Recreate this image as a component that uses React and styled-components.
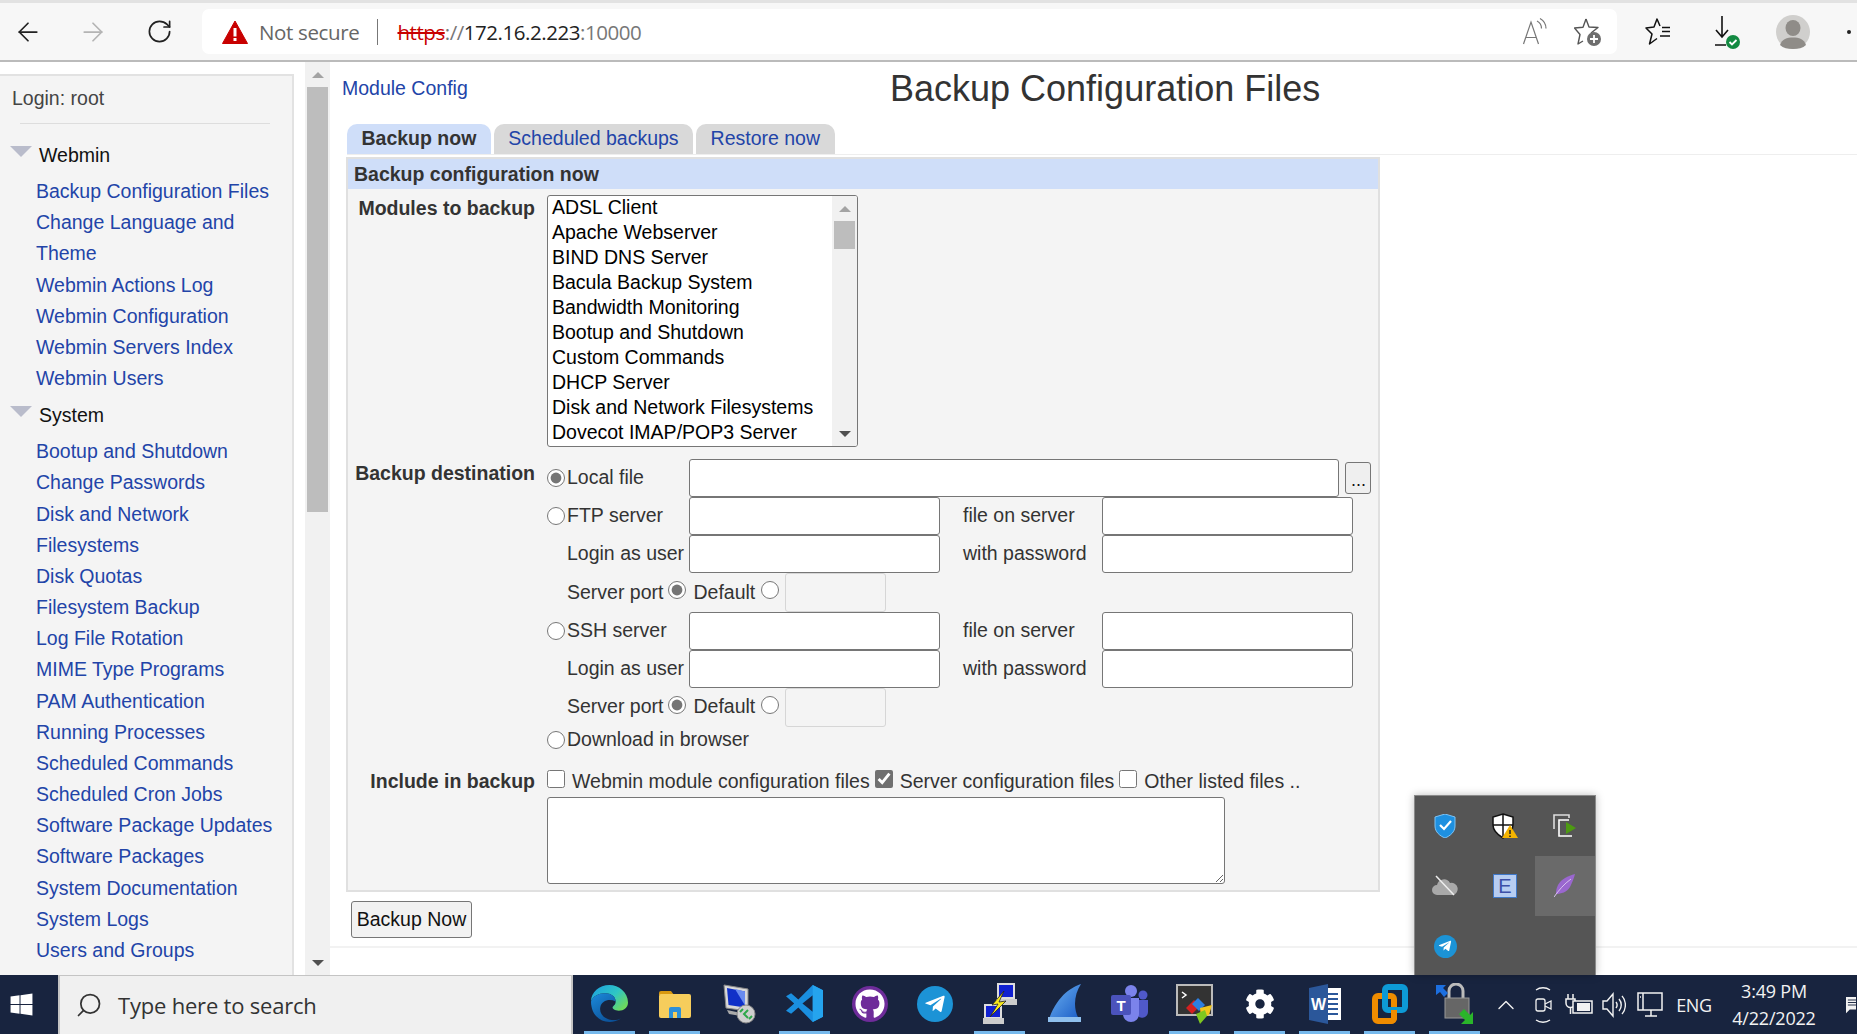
import React from 'react'
import styled, { createGlobalStyle } from 'styled-components'
import { ArrowLeft, ArrowRight, RotateCw, Search, ChevronUp } from 'lucide-react'
import { FaWindows, FaGithub, FaTelegramPlane, FaCog } from 'react-icons/fa'

const GlobalStyle = createGlobalStyle`
  html, body {
    margin: 0;
    padding: 0;
    height: 1034px;
    overflow: hidden;
    background: #fff;
    font-family: "Liberation Sans", Arial, sans-serif;
    font-size: 19.5px;
    color: #333;
  }
  * { box-sizing: border-box; }
`

const Screen = styled.div`
  position: relative;
  width: 1857px;
  height: 1034px;
  display: flex;
  flex-direction: column;
  overflow: hidden;
`

/* browser toolbar */
const Toolbar = styled.div`
  height: 62px;
  flex: none;
  background: #f7f7f7;
  border-top: 3px solid #e2e2e2;
  border-bottom: 2px solid #bbb;
  display: flex;
  align-items: center;
  padding-left: 13px;
  overflow: hidden;
`

const NavButton = styled.div`
  width: 30px;
  height: 30px;
  display: flex;
  align-items: center;
  justify-content: center;
  margin-right: ${p => p.$gap || 0}px;
  color: ${p => p.$dim ? '#b4b4b4' : '#222'};
  flex: none;
`

const AddressBar = styled.div`
  width: 1415px;
  height: 45px;
  margin-left: 28px;
  background: #fff;
  border-radius: 7px;
  display: flex;
  align-items: center;
  padding-left: 20px;
  font-family: "Open Sans", sans-serif;
  font-size: 20.5px;
  flex: none;
`

const NotSecure = styled.span`
  color: #666;
  margin-left: 11px;
  font-size: 20.5px;
  letter-spacing: -0.35px;
`

const Divider = styled.span`
  width: 1px;
  height: 26px;
  background: #777;
  margin: 0 19px 0 18px;
`

const UrlPart = styled.span`
  color: ${p => p.$color};
  text-decoration: ${p => p.$strike ? 'line-through' : 'none'};
  letter-spacing: -0.45px;
`

const AddressIcons = styled.div`
  margin-left: auto;
  display: flex;
  align-items: center;
  gap: 24px;
  padding-right: 15px;
`

const ToolIcons = styled.div`
  display: flex;
  align-items: center;
  margin-left: 28px;
`

const ToolSlot = styled.div`
  display: flex;
  margin-left: ${p => p.$gap || 0}px;
`

const MoreDot = styled.span`
  width: 4px;
  height: 4px;
  border-radius: 50%;
  background: #222;
  margin-left: 37px;
`

/* frame under the toolbar */
const Frame = styled.div`
  flex: 1;
  min-height: 0;
  display: flex;
  background: #fff;
`

const Sidebar = styled.aside`
  width: 294px;
  margin-top: 12px;
  flex: none;
  background: #f4f4f4;
  border-top: 2px solid #e2e2e2;
  border-right: 2px solid #e2e2e2;
  padding: 10px 0 0 12px;
  overflow: hidden;
`

const Login = styled.div`
  line-height: 24px;
  color: #444;
`

const SideRule = styled.hr`
  border: 0;
  height: 1px;
  background: #ddd;
  width: 250px;
  margin: 13px 0 0 8px;
`

const SectionTitle = styled.div`
  display: flex;
  align-items: center;
  line-height: 31px;
  color: #111;
  margin-top: ${p => p.$top}px;
  margin-left: -2px;
`

const Fold = styled.span`
  width: 0;
  height: 0;
  border-left: 11px solid transparent;
  border-right: 11px solid transparent;
  border-top: 11px solid #b9bccb;
  margin-right: 7px;
  position: relative;
  top: -4px;
`

const SideList = styled.div`
  margin: 5px 0 0 24px;
  width: 245px;
`

const SideLink = styled.a`
  display: block;
  color: #2244a8;
  line-height: 31.17px;
  text-decoration: none;
`

const ScrollColumn = styled.div`
  width: 25px;
  margin-left: 11px;
  flex: none;
  background: #f1f1f1;
  display: flex;
  flex-direction: column;
  align-items: center;
`

const ArrowCell = styled.div`
  height: 25px;
  flex: none;
  display: flex;
  align-items: center;
  justify-content: center;
  margin-top: ${p => p.$auto ? 'auto' : 0};
`

const ArrowUp = styled.span`
  border-left: 6px solid transparent;
  border-right: 6px solid transparent;
  border-bottom: 6px solid ${p => p.$color || '#a3a3a3'};
`

const ArrowDown = styled.span`
  border-left: 6px solid transparent;
  border-right: 6px solid transparent;
  border-top: 6px solid ${p => p.$color || '#505050'};
`

const ScrollThumb = styled.div`
  width: 21px;
  height: 425px;
  background: #bdbdbd;
  flex: none;
`

/* webmin page */
const Main = styled.main`
  flex: 1;
  min-width: 0;
`

const PageHead = styled.div`
  height: 62px;
  display: flex;
  align-items: flex-start;
  padding-left: 12px;
`

const ModuleLink = styled.a`
  color: #2244a8;
  text-decoration: none;
  line-height: 24px;
  margin-top: 14px;
  width: 548px;
`

const PageTitle = styled.h1`
  font-size: 36px;
  font-weight: 400;
  line-height: 40px;
  margin: 7px 0 0;
  color: #333;
`

const Tabs = styled.div`
  display: flex;
  gap: 3px;
  margin-left: 17px;
  height: 31px;
  border-bottom: 1px solid #eee;
`

const Tab = styled.a`
  height: 30px;
  padding: 0 14.5px;
  border-radius: 10px 10px 0 0;
  background: ${p => p.$active ? '#cfdef9' : '#d9d9d9'};
  color: ${p => p.$active ? '#333' : '#2244a8'};
  font-weight: ${p => p.$active ? 700 : 400};
  line-height: 28px;
  text-decoration: none;
`

const Panel = styled.section`
  width: 1034px;
  height: 735px;
  margin: 2px 0 0 16px;
  border: 2px solid #e0e0e0;
  background: #f4f4f4;
`

const PanelHead = styled.div`
  height: 30px;
  background: #cfdef9;
  font-weight: 700;
  padding-left: 6px;
  line-height: 30px;
  color: #333;
`

const FormRow = styled.div`
  display: grid;
  grid-template-columns: 187px 1fr;
  column-gap: 12px;
  margin-top: ${p => p.$top || 0}px;
`

const FieldLabel = styled.div`
  font-weight: 700;
  text-align: right;
  line-height: 26px;
  padding-top: ${p => p.$top || 0}px;
  white-space: nowrap;
`

const ListBox = styled.div`
  width: 311px;
  height: 252px;
  background: #fff;
  border: 1px solid #767676;
  border-radius: 3px;
  display: flex;
  overflow: hidden;
`

const ListItems = styled.ul`
  flex: 1;
  list-style: none;
  margin: -1px 0 0;
  padding: 0 0 0 4px;
`

const ListItem = styled.li`
  line-height: 25px;
  color: #000;
  white-space: nowrap;
`

const ListScroll = styled.div`
  width: 25px;
  flex: none;
  background: #f1f1f1;
  display: flex;
  flex-direction: column;
  align-items: center;
`

const ListThumb = styled.div`
  width: 21px;
  height: 28px;
  background: #bdbdbd;
  flex: none;
`

const DestGrid = styled.div`
  display: grid;
  grid-template-columns: 20px 122px 251px 162px 251px 20px;
  grid-template-rows: repeat(7, 38.2px) 28px;
  align-items: center;
`

const Radio = styled.input.attrs({ type: 'radio' })`
  width: 18px;
  height: 18px;
  margin: 0;
  accent-color: #757575;
  flex: none;
`

const CheckBox = styled.input.attrs({ type: 'checkbox' })`
  width: 18px;
  height: 18px;
  margin: 0;
  accent-color: #707070;
  flex: none;
  position: relative;
  top: -2px;
`

const FieldText = styled.label`
  white-space: nowrap;
  color: #333;
  grid-column: ${p => p.$col || 'auto'};
  padding-left: ${p => p.$pad || 0}px;
  margin-top: -1px;
`

const TextInput = styled.input.attrs({ type: 'text' })`
  height: 38px;
  width: ${p => p.$width || 251}px;
  border: 1px solid #767676;
  border-radius: 3px;
  background: #fff;
  padding: 0;
  grid-column: ${p => p.$col || 'auto'};
`

const WideCell = styled.div`
  grid-column: 3 / -1;
  display: flex;
  align-items: center;
  gap: 6px;
`

const BrowseButton = styled.button`
  width: 26px;
  height: 32px;
  padding: 4px 0 0 1px;
  border: 1px solid #767676;
  border-radius: 3px;
  background: #efefef;
  font-family: inherit;
  font-size: 18px;
  color: #111;
`

const PortCell = styled.div`
  grid-column: 2 / -1;
  display: flex;
  align-items: center;
  height: 38px;
`

const PortRadio = styled(Radio)`
  margin: -5px ${p => p.$after}px 0 ${p => p.$before}px;
`

const PortInput = styled.input.attrs({ type: 'text', disabled: true })`
  width: 101px;
  height: 39px;
  border: 1px solid #d6d6d6;
  border-radius: 3px;
  background: #f4f4f4;
  padding: 0;
`

const DownloadRow = styled.div`
  grid-column: 1 / -1;
  height: 28px;
  display: flex;
  align-items: center;
  gap: 2px;
`

const IncludeRow = styled.div`
  display: flex;
  align-items: center;
  height: 26px;
  white-space: nowrap;
`

const IncludeText = styled.span`
  margin: 1px ${p => p.$after}px 0 7px;
`

const NotesBox = styled.textarea`
  display: block;
  width: 678px;
  height: 87px;
  margin-top: 3px;
  border: 1px solid #767676;
  border-radius: 3px;
  background: #fff;
  padding: 0;
`

const SubmitButton = styled.button`
  display: block;
  width: 121px;
  height: 37px;
  margin: 9px 0 0 21px;
  padding: 0;
  border: 1px solid #767676;
  border-radius: 3px;
  background: #f2f2f2;
  font-family: inherit;
  font-size: 19.5px;
  color: #111;
`

const BottomRule = styled.hr`
  border: 0;
  height: 2px;
  background: #f2f2f2;
  margin: 8px 0 0;
`

/* windows taskbar */
const Taskbar = styled.footer`
  height: 59px;
  flex: none;
  background: #18243f;
  display: flex;
  align-items: stretch;
  color: #f0f0f0;
`

const StartButton = styled.div`
  width: 58px;
  flex: none;
  display: flex;
  align-items: center;
  justify-content: center;
  color: #fff;
  padding-right: 15px;
`

const SearchBox = styled.div`
  width: 515px;
  flex: none;
  background: #f0f0f0;
  border: 2px solid #c4c4c4;
  border-bottom: 0;
  border-top-width: 1px;
  display: flex;
  align-items: center;
  padding-left: 15px;
  gap: 15px;
  font-family: "Open Sans", sans-serif;
  font-size: 22px;
  letter-spacing: -0.2px;
  color: #333;
`

const MirroredSearch = styled(Search)`
  transform: scaleX(-1);
`

const TaskIcons = styled.div`
  display: flex;
  margin-left: 4px;
`

const TaskButton = styled.div`
  position: relative;
  width: 65px;
  display: flex;
  align-items: center;
  justify-content: center;
  padding-bottom: 2px;
  &::after {
    content: '';
    display: ${p => p.$open ? 'block' : 'none'};
    position: absolute;
    left: 7px;
    right: 7px;
    bottom: 0;
    height: 3px;
    background: #76b9ed;
  }
`

const TrayCell = styled.div`
  width: ${p => p.$width}px;
  flex: none;
  display: flex;
  align-items: center;
  justify-content: center;
  color: #f2f2f2;
`

const TrayLabel = styled(TrayCell)`
  font-family: "Open Sans", sans-serif;
  font-size: 18px;
  letter-spacing: -0.3px;
`

const Clock = styled(TrayCell)`
  flex-direction: column;
  font-family: "Open Sans", sans-serif;
  font-size: 18px;
  line-height: 27px;
  letter-spacing: -0.2px;
`

const NoticeCell = styled(TrayCell)`
  justify-content: flex-start;
  padding-left: 18px;
  overflow: hidden;
`

/* hidden-icons flyout, sits over the page */
const TrayPopup = styled.div`
  position: absolute;
  left: 1414px;
  top: 795px;
  width: 182px;
  height: 180px;
  background: #555;
  border: 1px solid #8a8a8a;
  border-bottom: 0;
  box-shadow: 0 0 8px rgba(0, 0, 0, 0.25);
  display: grid;
  grid-template-columns: repeat(3, 60px);
  grid-auto-rows: 60px;
`

const PopupCell = styled.div`
  display: flex;
  align-items: center;
  justify-content: center;
  background: ${p => p.$hover ? '#6a6a6a' : 'transparent'};
`

const RoundIcon = styled.div`
  width: ${p => p.$size}px;
  height: ${p => p.$size}px;
  border-radius: 50%;
  background: ${p => p.$bg};
  display: flex;
  align-items: center;
  justify-content: center;
  color: #fff;
`

/* drawings */
const WarningIcon = () => (
  <svg width="26" height="24" viewBox="0 0 26 24">
    <path d="M13 1 25.500 23.500H.5z" fill="#c80000" stroke="#c80000" strokeLinejoin="round" />
    <rect x="11.500" y="8" width="3" height="8.500" fill="#fff" />
    <rect x="11.500" y="18" width="3" height="3" fill="#fff" />
  </svg>
)

const ReadAloudIcon = () => (
  <svg width="28" height="28" viewBox="0 0 28 28" fill="none" stroke="#777" strokeWidth="1.200">
    <path d="M1.500 26 9 4l7.500 22M4 19.500h10" />
    <path d="M15 3c3 1.500 4.500 4 4.500 7.500M18 0.500c3.500 2 6 5 6 10" />
  </svg>
)

const FavAddIcon = () => (
  <svg width="28" height="30" viewBox="0 0 28 30" fill="none">
    <path d="M12 2l3 8 9 .5-7 5.500M9 24l-5 3 2-9.500L0.500 11l8.500-.8L12 2" stroke="#555" strokeWidth="1.400" strokeLinejoin="round" />
    <circle cx="20" cy="22" r="7" fill="#6e6e6e" />
    <path d="M20 18v8M16 22h8" stroke="#fff" strokeWidth="1.800" />
  </svg>
)

const FavBarIcon = () => (
  <svg width="26" height="28" viewBox="0 0 26 28" fill="none" stroke="#111" strokeWidth="1.500" strokeLinejoin="round">
    <path d="M15 8L12 1 9 9 1 10l6 6-2.500 10 7.500-5.500" />
    <path d="M17 9.500h8M17 13.500h8M15 18h10" />
  </svg>
)

const DownloadDoneIcon = () => (
  <svg width="26" height="34" viewBox="0 0 26 34" fill="none">
    <path d="M7 1v21M1 15l6 7 6-7M0 30h11" stroke="#111" strokeWidth="1.600" />
    <circle cx="18" cy="27" r="7" fill="#138a42" />
    <path d="M14.500 27l2.500 2.500 4.500-4.500" stroke="#fff" strokeWidth="1.800" />
  </svg>
)

const AvatarIcon = () => (
  <svg width="34" height="34" viewBox="0 0 34 34">
    <circle cx="17" cy="17" r="17" fill="#d0cfcd" />
    <ellipse cx="17" cy="13" rx="7.500" ry="8" fill="#8f8c88" />
    <path d="M4 30c2-6 7-7.500 13-7.500S28 24 30 30c-3 3-8 4-13 4s-10-1-13-4z" fill="#8f8c88" />
  </svg>
)

const EdgeIcon = () => (
  <svg width="37" height="37" viewBox="0 0 36 36">
    <defs>
      <linearGradient id="edgeTop" x1="0" y1="0" x2="1" y2="0.700">
        <stop offset="0" stopColor="#1b9de2" />
        <stop offset="0.600" stopColor="#2fc6c4" />
        <stop offset="1" stopColor="#6cd95e" />
      </linearGradient>
      <linearGradient id="edgeLow" x1="0" y1="0" x2="0.700" y2="1">
        <stop offset="0" stopColor="#1c8bdc" />
        <stop offset="1" stopColor="#0b4f96" />
      </linearGradient>
    </defs>
    <path d="M18 0C27 0 36 7 36 17c0 5-4 8-9 8-4 0-6-2-6-3 0-2 3-2 3-6 0-5-5-8-10-8C7 8 2 11 0 16 0 7 8 0 18 0z" fill="url(#edgeTop)" />
    <path d="M0 16c2-5 7-8 14-8 5 0 10 3 10 8-6-3-14-1-15 6-1 6 4 11 11 12 4 .5 7-.5 9-1.500-3 2-7 3.500-11 3.500C8 36 0 28 0 16z" fill="url(#edgeLow)" />
  </svg>
)

const FolderIcon = () => (
  <svg width="34" height="34" viewBox="0 0 34 34">
    <path d="M1 6a2 2 0 0 1 2-2h10l3 4H1z" fill="#d8980f" />
    <rect x="1" y="7" width="32" height="24" rx="2" fill="#f6cd5c" />
    <path d="M11 31v-9a2 2 0 0 1 2-2h8a2 2 0 0 1 2 2v9h-4v-6h-4v6z" fill="#2c8fd9" />
  </svg>
)

const RdpIcon = () => (
  <svg width="38" height="40" viewBox="0 0 38 40">
    <path d="M3 1l24 4v22L5 24z" fill="#d8d8d8" stroke="#888" />
    <path d="M6 4l18 3.500v16L7.500 21z" fill="#1030c8" />
    <path d="M14 5l10 2.500v14z" fill="#6a8cf0" />
    <path d="M6 26l14 3v3L8 30z" fill="#aaa" />
    <circle cx="25" cy="30" r="9" fill="#cfcfcf" stroke="#888" />
    <path d="M27 26l-4 4 4 4" fill="none" stroke="#2ea84a" strokeWidth="2" />
    <path d="M22 25l-3 3M28 35l3-3" stroke="#2ea84a" strokeWidth="2" />
  </svg>
)

const VsCodeIcon = () => (
  <svg width="37" height="37" viewBox="0 0 36 36">
    <path d="M26 0l10 5v26l-10 5-14-14-7 6-5-3 8-7-8-7 5-3 7 6z" fill="#1a8fe0" />
    <path d="M26 10v16l-10-8z" fill="#18243f" />
    <path d="M26 0l10 5v26l-10 5z" fill="#25a4ee" />
  </svg>
)

const WiresharkIcon = () => (
  <svg width="36" height="40" viewBox="0 0 36 40">
    <defs>
      <linearGradient id="finBlue" x1="0" y1="0" x2="1" y2="1">
        <stop offset="0" stopColor="#6fb4f2" />
        <stop offset="1" stopColor="#1658c4" />
      </linearGradient>
    </defs>
    <path d="M34 0C26 3 10 10 1 38h33C26 28 26 12 34 0z" fill="url(#finBlue)" />
    <path d="M1 33h33v5H1z" fill="#8fc0ee" />
  </svg>
)

const TeamsIcon = () => (
  <svg width="38" height="38" viewBox="0 0 38 38">
    <circle cx="20" cy="6" r="6" fill="#7b83eb" />
    <circle cx="32" cy="10" r="4.500" fill="#5059c9" />
    <path d="M26 15h11v12a6 6 0 0 1-11 3z" fill="#5059c9" />
    <path d="M10 13h18v16a8 8 0 0 1-16 0z" fill="#7b83eb" />
    <rect x="0" y="10" width="20" height="20" rx="2" fill="#4b53bc" />
    <text x="10" y="26" textAnchor="middle" fontFamily="Liberation Sans" fontWeight="700" fontSize="15" fill="#fff">T</text>
  </svg>
)

const MobaIcon = () => (
  <svg width="38" height="40" viewBox="0 0 38 40">
    <rect x="1" y="1" width="35" height="30" fill="#333" stroke="#bbb" strokeWidth="2" />
    <path d="M6 8l4 3-4 3" fill="none" stroke="#fff" strokeWidth="1.500" />
    <path d="M10 24l8-8 6 6-8 8z" fill="#d42020" />
    <path d="M22 14l7 7-6 6-7-7z" fill="#2d7fe0" />
    <path d="M24 24l12-3-3 10-8 3z" fill="#f2c61d" />
    <path d="M20 30l9-4 2 6-7 8z" fill="#7ec820" />
  </svg>
)

const WordIcon = () => (
  <svg width="32" height="40" viewBox="0 0 32 40">
    <rect x="14" y="4" width="18" height="32" fill="#fff" />
    <path d="M18 10h11M18 15h11M18 20h11M18 25h11M18 30h11" stroke="#2b579a" strokeWidth="2" />
    <path d="M0 4l19-4v40L0 36z" fill="#2b579a" />
    <text x="9.500" y="26" textAnchor="middle" fontFamily="Liberation Sans" fontWeight="700" fontSize="16" fill="#fff">W</text>
  </svg>
)

const VmwareIcon = () => (
  <svg width="36" height="40" viewBox="0 0 36 40" fill="none" strokeWidth="6">
    <path d="M3 15a3 3 0 0 1 3-3h13a3 3 0 0 1 3 3v19a3 3 0 0 1-3 3H6a3 3 0 0 1-3-3z" stroke="#ef8c00" />
    <path d="M13 6a3 3 0 0 1 3-3h14a3 3 0 0 1 3 3v17a3 3 0 0 1-3 3H16a3 3 0 0 1-3-3z" stroke="#0d9ad6" />
    <path d="M22 26v8a3 3 0 0 1-3 3H6" stroke="#ef8c00" />
  </svg>
)

const LockIcon = () => (
  <svg width="38" height="42" viewBox="0 0 38 42">
    <path d="M13 16V8a7 7 0 0 1 14 0v8" fill="none" stroke="#bbb" strokeWidth="3" />
    <rect x="9" y="15" width="24" height="20" fill="#666" stroke="#999" />
    <path d="M0 12V2h10L7 5l5 5-4 4-4-5z" fill="#1c6fe0" />
    <path d="M37 41H25l4-4-6-6 5-5 6 6 3-3z" fill="#2ab52a" />
  </svg>
)

const PuttyIcon = () => (
  <svg width="36" height="42" viewBox="0 0 36 42">
    <rect x="16" y="1" width="16" height="14" fill="#1020d0" stroke="#ddd" strokeWidth="2" />
    <rect x="14" y="16" width="21" height="6" fill="#ccc" />
    <rect x="3" y="22" width="16" height="13" fill="#1020d0" stroke="#ddd" strokeWidth="2" />
    <rect x="1" y="35" width="21" height="6" fill="#ccc" />
    <path d="M22 8l-12 14 6-1-8 13 16-16-7 1z" fill="#f6e71c" stroke="#222" strokeWidth="0.800" />
  </svg>
)

const MeetIcon = () => (
  <svg width="20" height="38" viewBox="0 0 20 38" fill="none" stroke="#f2f2f2" strokeWidth="1.300">
    <path d="M3 4c4-3 10-3 14 0M3 34c4 3 10 3 14 0" />
    <rect x="3" y="13" width="9" height="12" rx="2" />
    <path d="M12 18l6-3v8l-6-3" />
  </svg>
)

const BatteryIcon = () => (
  <svg width="28" height="24" viewBox="0 0 28 24" fill="none" stroke="#f2f2f2" strokeWidth="1.500">
    <path d="M3 1v5M8 1v5M1 6h9v4a4 4 0 0 1-9 0zM5.500 14v7" />
    <rect x="8" y="8" width="19" height="12" fill="#18243f" />
    <rect x="12" y="10" width="13" height="8" fill="#f2f2f2" stroke="none" />
  </svg>
)

const VolumeIcon = () => (
  <svg width="24" height="28" viewBox="0 0 24 28" fill="none" stroke="#f2f2f2" strokeWidth="1.400">
    <path d="M1 10h4l6-7v22l-6-7H1z" />
    <path d="M14 11c1.500 2 1.500 4 0 6M17 8c3 3.500 3 8.500 0 12M20 5c4.500 5 4.500 13 0 18" />
  </svg>
)

const NetworkIcon = () => (
  <svg width="26" height="26" viewBox="0 0 26 26" fill="none" stroke="#f2f2f2" strokeWidth="1.500">
    <path d="M6 1h19v17H6M1 1h5v17H1zM3 5h1M14 18v6M8 24h12" />
  </svg>
)

const NoticeIcon = () => (
  <svg width="16" height="30" viewBox="0 0 16 30">
    <path d="M0 2h16v20H6l-6 6z" fill="#f2f2f2" />
    <path d="M3 7h13M3 11h13M3 15h13" stroke="#18243f" strokeWidth="1.500" />
  </svg>
)

const DefenderIcon = () => (
  <svg width="22" height="24" viewBox="0 0 22 24">
    <path d="M11 0l10 3v9c0 6-5 10-10 12C6 22 1 18 1 12V3z" fill="#1e90e0" stroke="#7fc4f5" />
    <path d="M6 11l4 4 7-8" fill="none" stroke="#fff" strokeWidth="2.200" />
  </svg>
)

const SecurityIcon = () => (
  <svg width="26" height="26" viewBox="0 0 26 26">
    <path d="M11 1l10 3v8c0 6-5 10-10 13C6 22 1 18 1 12V4z" fill="#fff" stroke="#111" strokeWidth="1.500" />
    <path d="M11 1v24M1 12h20" stroke="#111" strokeWidth="1.500" />
    <path d="M18 12l8 13H10z" fill="#f5b400" />
    <path d="M18 17v4M18 22.500v1.500" stroke="#222" strokeWidth="1.500" />
  </svg>
)

const ScreensIcon = () => (
  <svg width="24" height="24" viewBox="0 0 24 24" fill="none">
    <path d="M1 15V1h15v3" stroke="#ddd" strokeWidth="1.600" />
    <path d="M16 6H6v16h13" stroke="#fff" strokeWidth="1.600" />
    <path d="M13 8l10 6-10 6z" fill="#4d9a12" />
  </svg>
)

const CloudOffIcon = () => (
  <svg width="26" height="22" viewBox="0 0 26 22">
    <path d="M5 20a5 5 0 0 1 0-10 7 7 0 0 1 13-2 6 6 0 0 1 3 12z" fill="#a9a9a9" />
    <path d="M4 1l18 19" stroke="#eee" strokeWidth="1.500" />
  </svg>
)

const EditorIcon = () => (
  <svg width="24" height="24" viewBox="0 0 24 24">
    <rect x="0.500" y="0.500" width="23" height="23" fill="#b7cdf2" stroke="#3f78c8" />
    <text x="12" y="19" textAnchor="middle" fontFamily="Liberation Sans" fontSize="20" fill="#3c4fa8">E</text>
  </svg>
)

const FeatherIcon = () => (
  <svg width="22" height="24" viewBox="0 0 22 24">
    <path d="M21 0C14 2 7 5 4 11c-2 4-2 7-2 9 5 0 11-2 14-7 2-4 4-9 5-13z" fill="#9a67cf" />
    <path d="M0 23C5 16 10 10 17 5" stroke="#d8c4ee" strokeWidth="1" fill="none" />
  </svg>
)

const sidebarWebmin = [
  'Backup Configuration Files', 'Change Language and Theme', 'Webmin Actions Log',
  'Webmin Configuration', 'Webmin Servers Index', 'Webmin Users',
]

const sidebarSystem = [
  'Bootup and Shutdown', 'Change Passwords', 'Disk and Network Filesystems', 'Disk Quotas',
  'Filesystem Backup', 'Log File Rotation', 'MIME Type Programs', 'PAM Authentication',
  'Running Processes', 'Scheduled Commands', 'Scheduled Cron Jobs', 'Software Package Updates',
  'Software Packages', 'System Documentation', 'System Logs', 'Users and Groups',
]

const modules = [
  'ADSL Client', 'Apache Webserver', 'BIND DNS Server', 'Bacula Backup System', 'Bandwidth Monitoring',
  'Bootup and Shutdown', 'Custom Commands', 'DHCP Server', 'Disk and Network Filesystems', 'Dovecot IMAP/POP3 Server',
]

const ServerFields = ({ name, group }) => (
  <>
    <Radio name="dest" />
    <FieldText>{name}</FieldText>
    <TextInput />
    <FieldText $pad={23}>file on server</FieldText>
    <TextInput />
    <span />
    <FieldText $col="2">Login as user</FieldText>
    <TextInput />
    <FieldText $pad={23}>with password</FieldText>
    <TextInput />
    <span />
    <PortCell>
      <FieldText>Server port</FieldText>
      <PortRadio name={group} defaultChecked $before={5} $after={7} />
      <FieldText>Default</FieldText>
      <PortRadio name={group} $before={6} $after={6} />
      <PortInput />
    </PortCell>
  </>
)

export default function App() {
  return (
    <Screen>
      <GlobalStyle />
      <Toolbar>
        <NavButton $gap={35}><ArrowLeft size={30} strokeWidth={1.4} /></NavButton>
        <NavButton $dim $gap={36}><ArrowRight size={30} strokeWidth={1.4} /></NavButton>
        <NavButton><RotateCw size={27} strokeWidth={1.5} /></NavButton>
        <AddressBar>
          <WarningIcon />
          <NotSecure>Not secure</NotSecure>
          <Divider />
          <UrlPart $color="#c80000" $strike>https</UrlPart>
          <UrlPart $color="#777">://</UrlPart>
          <UrlPart $color="#222">172.16.2.223</UrlPart>
          <UrlPart $color="#777">:10000</UrlPart>
          <AddressIcons>
            <ReadAloudIcon />
            <FavAddIcon />
          </AddressIcons>
        </AddressBar>
        <ToolIcons>
          <ToolSlot><FavBarIcon /></ToolSlot>
          <ToolSlot $gap={44}><DownloadDoneIcon /></ToolSlot>
          <ToolSlot $gap={35}><AvatarIcon /></ToolSlot>
          <MoreDot />
        </ToolIcons>
      </Toolbar>

      <Frame>
        <Sidebar>
          <Login>Login: root</Login>
          <SideRule />
          <SectionTitle $top={16}><Fold />Webmin</SectionTitle>
          <SideList>
            {sidebarWebmin.map(item => <SideLink key={item} href="#">{item}</SideLink>)}
          </SideList>
          <SectionTitle $top={6}><Fold />System</SectionTitle>
          <SideList>
            {sidebarSystem.map(item => <SideLink key={item} href="#">{item}</SideLink>)}
          </SideList>
        </Sidebar>

        <ScrollColumn>
          <ArrowCell><ArrowUp /></ArrowCell>
          <ScrollThumb />
          <ArrowCell $auto><ArrowDown /></ArrowCell>
        </ScrollColumn>

        <Main>
          <PageHead>
            <ModuleLink href="#">Module Config</ModuleLink>
            <PageTitle>Backup Configuration Files</PageTitle>
          </PageHead>
          <Tabs>
            <Tab $active href="#">Backup now</Tab>
            <Tab href="#">Scheduled backups</Tab>
            <Tab href="#">Restore now</Tab>
          </Tabs>
          <Panel>
            <PanelHead>Backup configuration now</PanelHead>
            <FormRow $top={6}>
              <FieldLabel>Modules to backup</FieldLabel>
              <ListBox>
                <ListItems>
                  {modules.map(name => <ListItem key={name}>{name}</ListItem>)}
                </ListItems>
                <ListScroll>
                  <ArrowCell><ArrowUp /></ArrowCell>
                  <ListThumb />
                  <ArrowCell $auto><ArrowDown /></ArrowCell>
                </ListScroll>
              </ListBox>
            </FormRow>
            <FormRow $top={12}>
              <FieldLabel $top={1}>Backup destination</FieldLabel>
              <DestGrid>
                <Radio name="dest" defaultChecked />
                <FieldText>Local file</FieldText>
                <WideCell>
                  <TextInput $width={650} />
                  <BrowseButton>...</BrowseButton>
                </WideCell>
                <ServerFields name="FTP server" group="ftp" />
                <ServerFields name="SSH server" group="ssh" />
                <DownloadRow>
                  <Radio name="dest" />
                  <FieldText>Download in browser</FieldText>
                </DownloadRow>
              </DestGrid>
            </FormRow>
            <FormRow $top={14}>
              <FieldLabel>Include in backup</FieldLabel>
              <div>
                <IncludeRow>
                  <CheckBox />
                  <IncludeText $after={5}>Webmin module configuration files</IncludeText>
                  <CheckBox defaultChecked />
                  <IncludeText $after={5}>Server configuration files</IncludeText>
                  <CheckBox />
                  <IncludeText $after={0}>Other listed files ..</IncludeText>
                </IncludeRow>
                <NotesBox />
              </div>
            </FormRow>
          </Panel>
          <SubmitButton>Backup Now</SubmitButton>
          <BottomRule />
        </Main>

        <TrayPopup>
          <PopupCell><DefenderIcon /></PopupCell>
          <PopupCell><SecurityIcon /></PopupCell>
          <PopupCell><ScreensIcon /></PopupCell>
          <PopupCell><CloudOffIcon /></PopupCell>
          <PopupCell><EditorIcon /></PopupCell>
          <PopupCell $hover><FeatherIcon /></PopupCell>
          <PopupCell>
            <RoundIcon $size={23} $bg="#1c93d6"><FaTelegramPlane size={14} /></RoundIcon>
          </PopupCell>
        </TrayPopup>
      </Frame>

      <Taskbar>
        <StartButton><FaWindows size={25} /></StartButton>
        <SearchBox>
          <MirroredSearch size={28} strokeWidth={1.5} />
          <span>Type here to search</span>
        </SearchBox>
        <TaskIcons>
          <TaskButton $open><EdgeIcon /></TaskButton>
          <TaskButton $open><FolderIcon /></TaskButton>
          <TaskButton><RdpIcon /></TaskButton>
          <TaskButton $open><VsCodeIcon /></TaskButton>
          <TaskButton>
            <RoundIcon $size={36} $bg="#6e2c9a"><FaGithub size={30} /></RoundIcon>
          </TaskButton>
          <TaskButton>
            <RoundIcon $size={36} $bg="#1c93d6"><FaTelegramPlane size={22} /></RoundIcon>
          </TaskButton>
          <TaskButton $open><PuttyIcon /></TaskButton>
          <TaskButton><WiresharkIcon /></TaskButton>
          <TaskButton><TeamsIcon /></TaskButton>
          <TaskButton $open><MobaIcon /></TaskButton>
          <TaskButton $open><FaCog size={30} color="#fff" /></TaskButton>
          <TaskButton $open><WordIcon /></TaskButton>
          <TaskButton $open><VmwareIcon /></TaskButton>
          <TaskButton $open><LockIcon /></TaskButton>
        </TaskIcons>
        <TrayCell $width={37}><ChevronUp size={28} strokeWidth={1.2} /></TrayCell>
        <TrayCell $width={37}><MeetIcon /></TrayCell>
        <TrayCell $width={35}><BatteryIcon /></TrayCell>
        <TrayCell $width={36}><VolumeIcon /></TrayCell>
        <TrayCell $width={36}><NetworkIcon /></TrayCell>
        <TrayLabel $width={52}>ENG</TrayLabel>
        <Clock $width={108}>
          <span>3:49 PM</span>
          <span>4/22/2022</span>
        </Clock>
        <NoticeCell $width={28}><NoticeIcon /></NoticeCell>
      </Taskbar>
    </Screen>
  )
}
